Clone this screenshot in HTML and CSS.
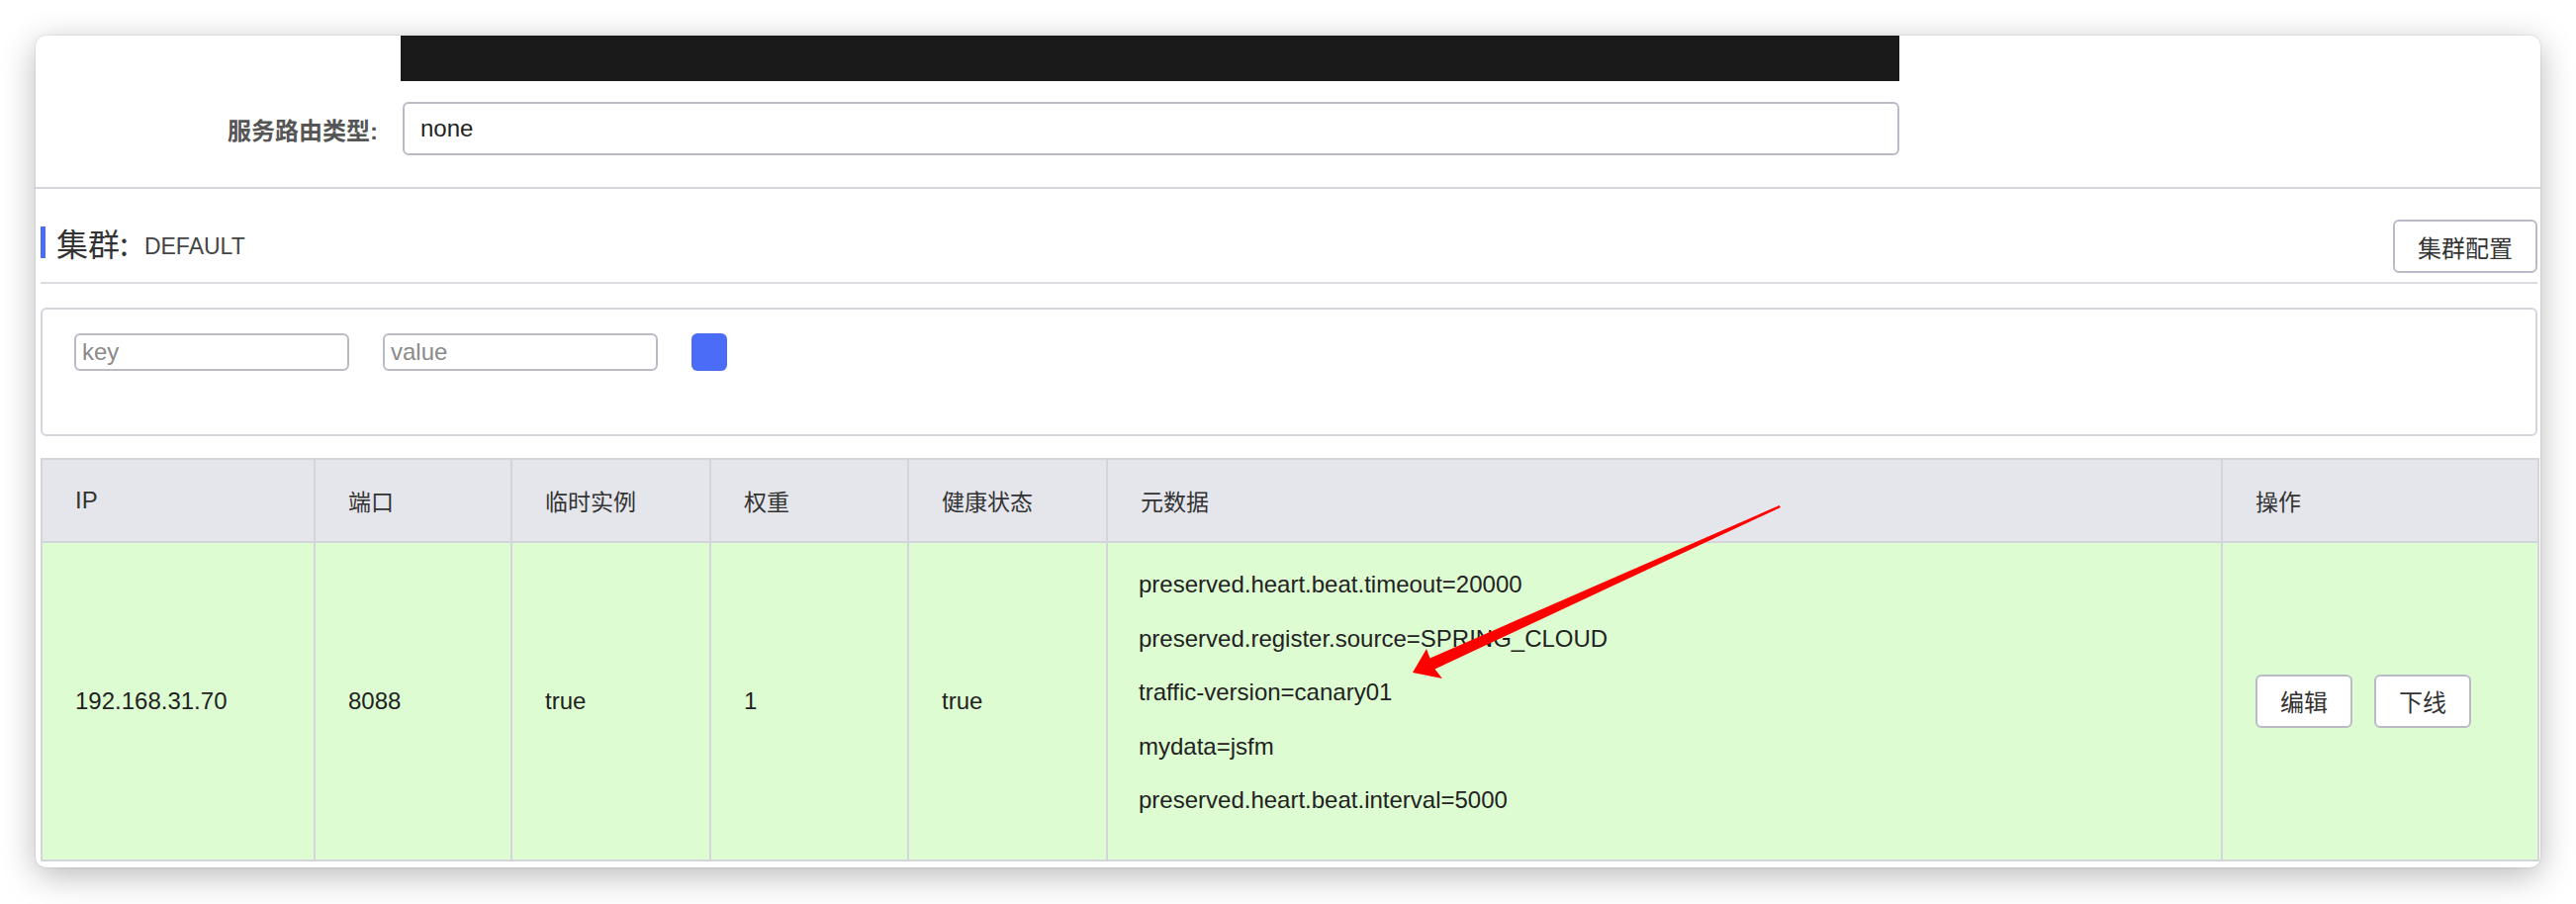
FILE: index.html
```html
<!DOCTYPE html>
<html lang="zh-CN">
<head>
<meta charset="utf-8">
<title>集群</title>
<link rel="stylesheet" href="styles.css">
</head>
<body>
<div class="page">
  <div class="card">
    <div class="topbar"></div>
    <div class="form-row">
      <label class="form-label">服务路由类型:</label>
      <div class="text-input wide">none</div>
    </div>
    <div class="divider"></div>
    <div class="section">
      <div class="cluster-head">
        <div class="cluster-title">
          <span class="title-bar"></span>
          <span class="title-main">集群:</span>
          <span class="title-sub">DEFAULT</span>
        </div>
        <button class="btn btn-config">集群配置</button>
      </div>
      <div class="filter">
        <div class="small-input">key</div>
        <div class="small-input">value</div>
        <div class="blue-btn"></div>
      </div>
      <table class="grid">
        <colgroup>
          <col class="c-ip"><col class="c-port"><col class="c-eph"><col class="c-weight"><col class="c-health"><col class="c-meta"><col class="c-op">
        </colgroup>
        <thead>
          <tr>
            <th>IP</th><th>端口</th><th>临时实例</th><th>权重</th><th>健康状态</th><th>元数据</th><th>操作</th>
          </tr>
        </thead>
        <tbody>
          <tr>
            <td>192.168.31.70</td>
            <td>8088</td>
            <td>true</td>
            <td>1</td>
            <td>true</td>
            <td class="meta">
              <div class="meta-line">preserved.heart.beat.timeout=20000</div>
              <div class="meta-line">preserved.register.source=SPRING_CLOUD</div>
              <div class="meta-line">traffic-version=canary01</div>
              <div class="meta-line">mydata=jsfm</div>
              <div class="meta-line">preserved.heart.beat.interval=5000</div>
            </td>
            <td class="ops">
              <div class="ops-wrap">
                <button class="btn btn-op">编辑</button>
                <button class="btn btn-op">下线</button>
              </div>
            </td>
          </tr>
        </tbody>
      </table>
    </div>
  </div>
  <svg class="arrow" width="2604" height="914" viewBox="0 0 2604 914" xmlns="http://www.w3.org/2000/svg">
    <path d="M1428 680 L1442 656 L1445.5 665.4 L1798.6 511 L1800 513 L1450.5 676.4 L1458 686 Z" fill="#ff0000"/>
  </svg>
</div>
</body>
</html>
```
FILE: styles.css
```css
html, body {
  margin: 0;
  padding: 0;
  background: #ffffff;
}
body {
  font-family: "Liberation Sans", Arial, "Noto Sans CJK SC", sans-serif;
  color: #333;
  width: 2604px;
  height: 914px;
  overflow: hidden;
}
.page {
  position: relative;
  width: 2604px;
  height: 914px;
  padding-top: 36px;
  box-sizing: border-box;
}
.card {
  margin-left: 36px;
  width: 2532px;
  height: 841px;
  background: #fff;
  border-radius: 10px;
  box-shadow: 0 8px 34px rgba(0,0,0,0.28), 0 0 2px rgba(0,0,0,0.18);
  overflow: hidden;
  box-sizing: border-box;
}
.topbar {
  margin-left: 369px;
  width: 1515px;
  height: 46px;
  background: #1a1a1a;
}
.form-row {
  display: flex;
  align-items: center;
  margin-top: 21px;
  height: 54px;
  gap: 25px;
}
.form-label {
  width: 346px;
  text-align: right;
  font-size: 24px;
  font-weight: bold;
  color: #555;
}
.text-input {
  box-sizing: border-box;
  height: 54px;
  border: 2px solid #babbc7;
  border-radius: 6px;
  padding-left: 16px;
  display: flex;
  align-items: center;
  font-size: 24px;
  color: #222;
}
.text-input.wide {
  width: 1513px;
}
.divider {
  margin-top: 32px;
  height: 2px;
  background: #d5d6dd;
}
.section {
  padding: 0 3px 0 5px;
}
.cluster-head {
  margin-top: 31px;
  padding-bottom: 9px;
  border-bottom: 2px solid #dcdde3;
  display: flex;
  justify-content: space-between;
  align-items: center;
}
.cluster-title {
  display: flex;
  align-items: center;
  margin-bottom: 8px;
}
.title-bar {
  width: 5px;
  height: 32px;
  background: #4a6cf7;
  margin-right: 11px;
}
.title-main {
  font-family: "Noto Sans CJK SC", sans-serif;
  font-size: 32px;
  color: #333;
  line-height: 40px;
}
.title-sub {
  font-size: 23px;
  color: #444;
  margin-left: 16px;
  margin-top: 8px;
}
.btn {
  box-sizing: border-box;
  background: #fff;
  border: 2px solid #babbc7;
  border-radius: 6px;
  font-family: "Noto Sans CJK SC", sans-serif;
  font-size: 24px;
  color: #333;
  padding: 0;
  cursor: pointer;
}
.btn-config {
  width: 146px;
  height: 54px;
}
.filter {
  margin-top: 24px;
  height: 130px;
  box-sizing: border-box;
  border: 2px solid #d5d6dd;
  border-radius: 6px;
  padding: 24px 0 0 32px;
  display: flex;
  align-items: flex-start;
  gap: 34px;
}
.small-input {
  box-sizing: border-box;
  width: 278px;
  height: 38px;
  border: 2px solid #babbc7;
  border-radius: 6px;
  padding-left: 6px;
  font-size: 24px;
  color: #8a8a8a;
  line-height: 34px;
}
.blue-btn {
  width: 36px;
  height: 38px;
  border-radius: 6px;
  background: #4a6cf7;
}
.grid {
  margin-top: 22px;
  width: 2524px;
  border-collapse: collapse;
  table-layout: fixed;
  font-size: 24px;
}
.c-ip { width: 276px; }
.c-port { width: 199px; }
.c-eph { width: 201px; }
.c-weight { width: 200px; }
.c-health { width: 201px; }
.c-meta { width: 1127px; }
.c-op { width: 320px; }
.grid th, .grid td {
  border: 2px solid #d4d5db;
  text-align: left;
  padding: 0 0 0 33px;
}
.grid th {
  height: 82px;
  background: #e5e6ec;
  font-weight: normal;
  color: #333;
  font-family: "Noto Sans CJK SC", sans-serif;
  font-size: 23px;
}
.grid th:first-child {
  font-family: "Liberation Sans", Arial, sans-serif;
  font-size: 24px;
}
.grid td {
  background: #defcd2;
  color: #222;
  vertical-align: middle;
  height: 319px;
}
.grid td.meta {
  padding: 15px 0 32px 31px;
  box-sizing: border-box;
}
.meta-line {
  line-height: 54.5px;
  white-space: nowrap;
}
.ops-wrap {
  display: flex;
  gap: 22px;
}
.btn-op {
  width: 98px;
  height: 54px;
}
.arrow {
  position: absolute;
  left: 0;
  top: 0;
  pointer-events: none;
}
```
